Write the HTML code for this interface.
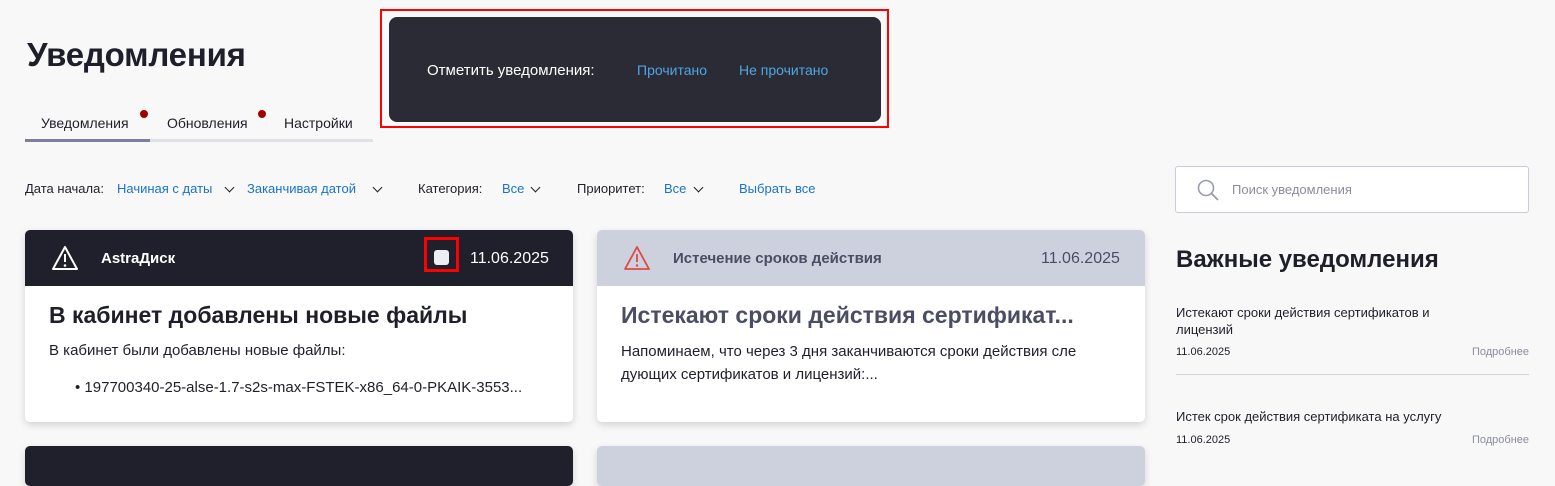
<!DOCTYPE html>
<html><head><meta charset="utf-8"><style>
*{margin:0;padding:0;box-sizing:border-box}
body{width:1555px;height:456px;overflow:hidden;background:#f8f8f8;font-family:"Liberation Sans","DejaVu Sans",sans-serif;color:#1f1f2b;position:relative}
.a{position:absolute;white-space:nowrap}
.blue{color:#1a73c8}
.card{position:absolute;background:#fff;border-radius:5px;box-shadow:0 3px 8px rgba(0,0,0,.15);overflow:hidden}
.hd{height:56px;position:relative}
.chev{position:absolute;width:7px;height:7px;border-right:1.5px solid #1f1f2b;border-bottom:1.5px solid #1f1f2b;transform:rotate(45deg)}
.f{font-size:13px;top:181px}
</style></head><body>
<div class="a" style="left:27px;top:36px;font-size:33px;font-weight:bold;letter-spacing:-0.2px">Уведомления</div>
<div class="a" style="left:41px;top:115px;font-size:14px">Уведомления</div>
<div class="a" style="left:167px;top:115px;font-size:14px">Обновления</div>
<div class="a" style="left:284px;top:115px;font-size:14px">Настройки</div>
<div class="a" style="left:140px;top:110px;width:8px;height:8px;border-radius:50%;background:#a10000"></div>
<div class="a" style="left:258px;top:110px;width:8px;height:8px;border-radius:50%;background:#a10000"></div>
<div class="a" style="left:25px;top:139px;width:348px;height:3px;background:#e0e0ea"></div>
<div class="a" style="left:25px;top:139px;width:125px;height:3px;background:#7c7ea0"></div>

<div class="a" style="left:380px;top:9px;width:509px;height:119px;border:2px solid #ff0000"></div>
<div class="a" style="left:389px;top:17px;width:492px;height:105px;background:#2b2b35;border-radius:8px"></div>
<div class="a" style="left:427px;top:62px;font-size:15px;color:#fff">Отметить уведомления:</div>
<div class="a" style="left:637px;top:62px;font-size:14px;color:#4fa6e4">Прочитано</div>
<div class="a" style="left:739px;top:62px;font-size:14px;color:#4fa6e4">Не прочитано</div>

<div class="a f" style="left:25px">Дата начала:</div>
<div class="a f blue" style="left:117px">Начиная с даты</div>
<div class="chev" style="left:226px;top:184px"></div>
<div class="a f blue" style="left:247px">Заканчивая датой</div>
<div class="chev" style="left:374px;top:184px"></div>
<div class="a f" style="left:418px">Категория:</div>
<div class="a f blue" style="left:502px">Все</div>
<div class="chev" style="left:532px;top:184px"></div>
<div class="a f" style="left:577px">Приоритет:</div>
<div class="a f blue" style="left:664px">Все</div>
<div class="chev" style="left:695px;top:184px"></div>
<div class="a f blue" style="left:739px">Выбрать все</div>

<div class="a" style="left:1175px;top:166px;width:354px;height:47px;background:#fff;border:1px solid #c9ccd8;border-radius:3px"></div>
<svg class="a" style="left:1196px;top:178px" width="26" height="26" viewBox="0 0 26 26"><circle cx="10" cy="10" r="7.5" fill="none" stroke="#9a9db0" stroke-width="1.6"/><path d="M15.5 15.5L22 22" stroke="#9a9db0" stroke-width="1.8"/></svg>
<div class="a" style="left:1232px;top:182px;font-size:13px;color:#8a8c9c">Поиск уведомления</div>

<div class="card" style="left:25px;top:230px;width:548px;height:192px">
 <div class="hd" style="background:#1f202b">
  <svg class="a" style="left:26px;top:15px" width="28" height="26" viewBox="0 0 28 26"><path d="M14 2L26 24H2Z" fill="none" stroke="#fff" stroke-width="2" stroke-linejoin="round"/><path d="M14 9v8" stroke="#fff" stroke-width="2"/><circle cx="14" cy="20.5" r="1.3" fill="#fff"/></svg>
  <div class="a" style="left:76px;top:20px;font-size:15px;font-weight:bold;color:#fff">AstraДиск</div>
  <div class="a" style="left:399px;top:7px;width:35px;height:35px;border:3px solid #ff0000"></div>
  <div class="a" style="left:409px;top:20px;width:15px;height:15px;background:#eceef4;border-radius:3px"></div>
  <div class="a" style="left:445px;top:20px;font-size:16px;color:#fff">11.06.2025</div>
 </div>
 <div class="a" style="left:24px;top:72px;font-size:23px;font-weight:bold">В кабинет добавлены новые файлы</div>
 <div class="a" style="left:24px;top:112px;font-size:15px">В кабинет были добавлены новые файлы:</div>
 <div class="a" style="left:50px;top:149px;font-size:15px;width:470px;overflow:hidden;text-overflow:ellipsis">• 197700340-25-alse-1.7-s2s-max-FSTEK-x86_64-0-PKAIK-3553...</div>
</div>

<div class="card" style="left:597px;top:230px;width:548px;height:192px">
 <div class="hd" style="background:#cdd1de">
  <svg class="a" style="left:26px;top:15px" width="28" height="26" viewBox="0 0 28 26"><path d="M14 2L26 24H2Z" fill="none" stroke="#e04848" stroke-width="1.8" stroke-linejoin="round"/><path d="M14 9v8" stroke="#e04848" stroke-width="1.8"/><circle cx="14" cy="20.5" r="1.2" fill="#e04848"/></svg>
  <div class="a" style="left:76px;top:20px;font-size:15px;font-weight:bold;color:#4a4d63">Истечение сроков действия</div>
  <div class="a" style="left:444px;top:20px;font-size:16px;color:#4a4d63">11.06.2025</div>
 </div>
 <div class="a" style="left:24px;top:72px;font-size:23px;font-weight:bold;color:#4a4d63;width:470px;overflow:hidden;text-overflow:ellipsis">Истекают сроки действия сертификат...</div>
 <div class="a" style="left:24px;top:110px;font-size:15px;line-height:23px;white-space:normal;width:500px">Напоминаем, что через 3 дня заканчиваются сроки действия сле дующих сертификатов и лицензий:...</div>
</div>

<div class="card" style="left:25px;top:446px;width:548px;height:40px;background:#1f202b"></div>
<div class="card" style="left:597px;top:446px;width:548px;height:40px;background:#cdd1de"></div>

<div class="a" style="left:1176px;top:246px;font-size:24px;font-weight:bold">Важные уведомления</div>
<div class="a" style="left:1176px;top:304px;font-size:13px;line-height:17px;white-space:normal;width:300px">Истекают сроки действия сертификатов и лицензий</div>
<div class="a" style="left:1176px;top:346px;font-size:11px">11.06.2025</div>
<div class="a" style="right:26px;top:346px;font-size:11px;color:#8a8ca0">Подробнее</div>
<div class="a" style="left:1176px;top:374px;width:353px;height:1px;background:#d0d2dc"></div>
<div class="a" style="left:1176px;top:409px;font-size:13px">Истек срок действия сертификата на услугу</div>
<div class="a" style="left:1176px;top:434px;font-size:11px">11.06.2025</div>
<div class="a" style="right:26px;top:434px;font-size:11px;color:#8a8ca0">Подробнее</div>
</body></html>
